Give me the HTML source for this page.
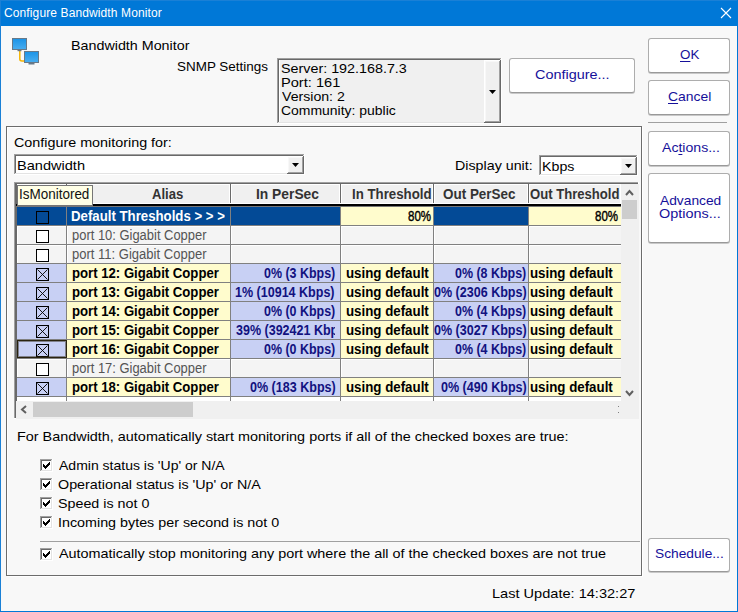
<!DOCTYPE html><html><head><meta charset="utf-8"><style>
html,body{margin:0;padding:0;width:738px;height:612px;overflow:hidden;background:#f8f8f8;}
body{position:relative;font-family:"Liberation Sans",sans-serif;}
.b,.t,.btn,.clip{position:absolute;}
.t{white-space:nowrap;}
.clip{overflow:hidden;}
u{text-underline-offset:2px;}
.btn{background:#fff;border:1px solid #adadad;border-bottom-color:#999;border-radius:3px;box-shadow:0 1px 0 #c8c8c8;}
</style></head><body>
<div class="b" style="left:0px;top:0px;width:738px;height:26px;background:#0078d7;"></div>
<div class="b" style="left:0px;top:0px;width:738px;height:1px;background:#1a80d6;"></div>
<div class="b" style="left:0px;top:0px;width:1px;height:612px;background:#1a80d6;"></div>
<div class="b" style="left:737px;top:0px;width:1px;height:612px;background:#0078d7;"></div>
<div class="b" style="left:0px;top:611px;width:738px;height:1px;background:#0078d7;"></div>
<div class="t" style="left:4.00px;top:5.84px;font-size:12px;line-height:14px;color:#fff;letter-spacing:0.115px;">Configure Bandwidth Monitor</div>
<svg class="b" style="left:719px;top:6px" width="14" height="14"><path d="M2 2 L12 12 M12 2 L2 12" stroke="#fff" stroke-width="1.1"/></svg>
<svg class="b" style="left:10px;top:36px" width="34" height="32" viewBox="0 0 34 32">
<defs><linearGradient id="mg" x1="0" y1="0" x2="0" y2="1"><stop offset="0" stop-color="#1b93e6"/><stop offset="1" stop-color="#4aaef0"/></linearGradient></defs>
<path d="M9.8 15 V23 Q9.8 25 12 25 H14.5" stroke="#f5b400" stroke-width="1.5" fill="none"/>
<rect x="2.5" y="2.5" width="14" height="11" fill="url(#mg)" stroke="#687988" stroke-width="1"/>
<rect x="7.5" y="14" width="4" height="1.2" fill="#687988"/>
<rect x="14.5" y="15.5" width="14" height="11" fill="url(#mg)" stroke="#687988" stroke-width="1"/>
<rect x="18.5" y="27" width="6" height="1.5" fill="#687988"/>
</svg>
<div class="t" style="left:71.20px;top:37.50px;font-size:13px;line-height:16px;color:#000;transform:scaleX(1.1000);transform-origin:0 0;">Bandwidth Monitor</div>
<div class="t" style="left:177.07px;top:58.50px;font-size:13px;line-height:16px;color:#000;transform:scaleX(1.0345);transform-origin:0 0;">SNMP Settings</div>
<div class="b" style="left:277px;top:58px;width:225px;height:66px;background:#fff;"></div>
<div class="b" style="left:277px;top:58px;width:224px;height:65px;background:#a0a0a0;"></div>
<div class="b" style="left:278px;top:59px;width:223px;height:64px;background:#e3e3e3;"></div>
<div class="b" style="left:278px;top:59px;width:222px;height:63px;background:#696969;"></div>
<div class="b" style="left:279px;top:60px;width:221px;height:62px;background:#f0f0f0;"></div>
<div class="b" style="left:279px;top:60px;width:1px;height:62px;background:#fff;"></div>
<div class="b" style="left:484px;top:60px;width:17px;height:63px;background:#696969;"></div>
<div class="b" style="left:484px;top:60px;width:16px;height:62px;background:#fff;"></div>
<div class="b" style="left:485px;top:61px;width:15px;height:61px;background:#a0a0a0;"></div>
<div class="b" style="left:485px;top:61px;width:14px;height:60px;background:#f8f8f8;"></div>
<div class="b" style="left:486px;top:62px;width:13px;height:59px;background:#f0f0f0;"></div>
<svg class="b" style="left:489px;top:90px" width="8" height="5"><path d="M0 0 H7 L3.5 4 Z" fill="#000"/></svg>
<div class="t" style="left:281.10px;top:60.50px;font-size:13px;line-height:16px;color:#000;transform:scaleX(1.1018);transform-origin:0 0;">Server: 192.168.7.3</div>
<div class="t" style="left:280.68px;top:74.50px;font-size:13px;line-height:16px;color:#000;transform:scaleX(1.1235);transform-origin:0 0;">Port: 161</div>
<div class="t" style="left:281.60px;top:88.50px;font-size:13px;line-height:16px;color:#000;transform:scaleX(1.0860);transform-origin:0 0;">Version: 2</div>
<div class="t" style="left:281.13px;top:102.50px;font-size:13px;line-height:16px;color:#000;transform:scaleX(1.0736);transform-origin:0 0;">Community: public</div>
<div class="btn" style="left:509px;top:58px;width:124px;height:33px;"></div>
<div class="t" style="left:535.49px;top:66.50px;font-size:13px;line-height:16px;color:#16109a;transform:scaleX(1.1092);transform-origin:0 0;">Configure...</div>
<div class="btn" style="left:648px;top:38px;width:80px;height:33px;"></div>
<div class="t" style="left:680.47px;top:46.50px;font-size:13px;line-height:16px;color:#16109a;transform:scaleX(1.0294);transform-origin:0 0;"><u>O</u>K</div>
<div class="btn" style="left:648px;top:80px;width:80px;height:33px;"></div>
<div class="t" style="left:667.93px;top:88.50px;font-size:13px;line-height:16px;color:#16109a;transform:scaleX(1.0718);transform-origin:0 0;"><u>C</u>ancel</div>
<div class="b" style="left:648px;top:122px;width:79px;height:1px;background:#a0a0a0;"></div>
<div class="btn" style="left:648px;top:131px;width:80px;height:33px;"></div>
<div class="t" style="left:662.20px;top:139.50px;font-size:13px;line-height:16px;color:#16109a;transform:scaleX(1.0827);transform-origin:0 0;">Ac<u>t</u>ions...</div>
<div class="btn" style="left:648px;top:173px;width:80px;height:68px;"></div>
<div class="t" style="left:660.10px;top:192.50px;font-size:13px;line-height:16px;color:#16109a;transform:scaleX(1.0596);transform-origin:0 0;">Advanced</div>
<div class="t" style="left:658.99px;top:205.50px;font-size:13px;line-height:16px;color:#16109a;transform:scaleX(1.1093);transform-origin:0 0;">Options...</div>
<div class="btn" style="left:648px;top:538px;width:80px;height:32px;"></div>
<div class="t" style="left:655.34px;top:546.00px;font-size:13px;line-height:16px;color:#16109a;transform:scaleX(1.0571);transform-origin:0 0;">Schedule...</div>
<div class="b" style="left:6px;top:126px;width:634px;height:448px;border:1px solid #6c6c6c;box-shadow:inset 1px 1px 0 #fff, 1px 1px 0 #fff;"></div>
<div class="t" style="left:13.97px;top:134.50px;font-size:13px;line-height:16px;color:#000;transform:scaleX(1.1030);transform-origin:0 0;">Configure monitoring for:</div>
<div class="b" style="left:14px;top:154px;width:291px;height:21px;background:#fff;"></div>
<div class="b" style="left:14px;top:154px;width:290px;height:20px;background:#a0a0a0;"></div>
<div class="b" style="left:15px;top:155px;width:289px;height:19px;background:#e3e3e3;"></div>
<div class="b" style="left:15px;top:155px;width:288px;height:18px;background:#696969;"></div>
<div class="b" style="left:16px;top:156px;width:287px;height:17px;background:#fff;"></div>
<div class="b" style="left:287px;top:156px;width:17px;height:18px;background:#696969;"></div>
<div class="b" style="left:287px;top:156px;width:16px;height:17px;background:#fff;"></div>
<div class="b" style="left:288px;top:157px;width:15px;height:16px;background:#a0a0a0;"></div>
<div class="b" style="left:288px;top:157px;width:14px;height:15px;background:#f8f8f8;"></div>
<div class="b" style="left:289px;top:158px;width:13px;height:14px;background:#f0f0f0;"></div>
<svg class="b" style="left:292px;top:163px" width="8" height="5"><path d="M0 0 H7 L3.5 4 Z" fill="#000"/></svg>
<div class="t" style="left:16.98px;top:157.50px;font-size:13px;line-height:16px;color:#000;transform:scaleX(1.1203);transform-origin:0 0;">Bandwidth</div>
<div class="t" style="left:454.50px;top:157.50px;font-size:13px;line-height:16px;color:#000;transform:scaleX(1.0971);transform-origin:0 0;">Display unit:</div>
<div class="b" style="left:539px;top:155px;width:99px;height:21px;background:#fff;"></div>
<div class="b" style="left:539px;top:155px;width:98px;height:20px;background:#a0a0a0;"></div>
<div class="b" style="left:540px;top:156px;width:97px;height:19px;background:#e3e3e3;"></div>
<div class="b" style="left:540px;top:156px;width:96px;height:18px;background:#696969;"></div>
<div class="b" style="left:541px;top:157px;width:95px;height:17px;background:#fff;"></div>
<div class="b" style="left:620px;top:157px;width:17px;height:18px;background:#696969;"></div>
<div class="b" style="left:620px;top:157px;width:16px;height:17px;background:#fff;"></div>
<div class="b" style="left:621px;top:158px;width:15px;height:16px;background:#a0a0a0;"></div>
<div class="b" style="left:621px;top:158px;width:14px;height:15px;background:#f8f8f8;"></div>
<div class="b" style="left:622px;top:159px;width:13px;height:14px;background:#f0f0f0;"></div>
<svg class="b" style="left:625px;top:164px" width="8" height="5"><path d="M0 0 H7 L3.5 4 Z" fill="#000"/></svg>
<div class="t" style="left:541.91px;top:158.50px;font-size:13px;line-height:16px;color:#000;transform:scaleX(1.0929);transform-origin:0 0;">Kbps</div>
<div class="b" style="left:14px;top:182px;width:625px;height:237px;background:#fff;"></div>
<div class="b" style="left:14px;top:182px;width:624px;height:236px;background:#a0a0a0;"></div>
<div class="b" style="left:15px;top:183px;width:623px;height:235px;background:#696969;"></div>
<div class="b" style="left:17px;top:184px;width:621px;height:234px;background:#fff;"></div>
<div class="b" style="left:17px;top:184px;width:604px;height:20px;background:#f0f0f0;"></div>
<div class="b" style="left:17px;top:184px;width:49px;height:1px;background:#fff;"></div>
<div class="b" style="left:17px;top:184px;width:1px;height:19px;background:#fff;"></div>
<div class="b" style="left:65px;top:184px;width:1px;height:19px;background:#fff;"></div>
<div class="b" style="left:66px;top:184px;width:1px;height:20px;background:#6a6a6a;"></div>
<div class="b" style="left:67px;top:184px;width:163px;height:1px;background:#fff;"></div>
<div class="b" style="left:67px;top:184px;width:1px;height:19px;background:#fff;"></div>
<div class="b" style="left:229px;top:184px;width:1px;height:19px;background:#fff;"></div>
<div class="b" style="left:230px;top:184px;width:1px;height:20px;background:#6a6a6a;"></div>
<div class="b" style="left:231px;top:184px;width:109px;height:1px;background:#fff;"></div>
<div class="b" style="left:231px;top:184px;width:1px;height:19px;background:#fff;"></div>
<div class="b" style="left:339px;top:184px;width:1px;height:19px;background:#fff;"></div>
<div class="b" style="left:340px;top:184px;width:1px;height:20px;background:#6a6a6a;"></div>
<div class="b" style="left:341px;top:184px;width:92px;height:1px;background:#fff;"></div>
<div class="b" style="left:341px;top:184px;width:1px;height:19px;background:#fff;"></div>
<div class="b" style="left:432px;top:184px;width:1px;height:19px;background:#fff;"></div>
<div class="b" style="left:433px;top:184px;width:1px;height:20px;background:#6a6a6a;"></div>
<div class="b" style="left:434px;top:184px;width:94px;height:1px;background:#fff;"></div>
<div class="b" style="left:434px;top:184px;width:1px;height:19px;background:#fff;"></div>
<div class="b" style="left:527px;top:184px;width:1px;height:19px;background:#fff;"></div>
<div class="b" style="left:528px;top:184px;width:1px;height:20px;background:#6a6a6a;"></div>
<div class="b" style="left:529px;top:184px;width:92px;height:1px;background:#fff;"></div>
<div class="b" style="left:529px;top:184px;width:1px;height:19px;background:#fff;"></div>
<div class="b" style="left:620px;top:184px;width:1px;height:19px;background:#fff;"></div>
<div class="b" style="left:621px;top:184px;width:1px;height:20px;background:#6a6a6a;"></div>
<div class="b" style="left:17px;top:203px;width:604px;height:1px;background:#fff;"></div>
<div class="b" style="left:16px;top:204px;width:605px;height:2px;background:#000;"></div>
<div class="b" style="left:16px;top:206px;width:605px;height:1px;background:#777;"></div>
<div class="t" style="left:152.20px;top:185.65px;font-size:14.0px;line-height:17px;color:#333;font-weight:bold;transform:scaleX(0.9364);transform-origin:0 0;">Alias</div>
<div class="t" style="left:255.81px;top:185.65px;font-size:14.0px;line-height:17px;color:#333;font-weight:bold;transform:scaleX(0.9871);transform-origin:0 0;">In PerSec</div>
<div class="t" style="left:351.55px;top:185.65px;font-size:14.0px;line-height:17px;color:#333;font-weight:bold;transform:scaleX(0.9476);transform-origin:0 0;">In Threshold</div>
<div class="t" style="left:442.54px;top:185.65px;font-size:14.0px;line-height:17px;color:#333;font-weight:bold;transform:scaleX(0.9608);transform-origin:0 0;">Out PerSec</div>
<div class="t" style="left:530.06px;top:185.65px;font-size:14.0px;line-height:17px;color:#333;font-weight:bold;transform:scaleX(0.9351);transform-origin:0 0;">Out Threshold</div>
<div class="b" style="left:17px;top:207px;width:49px;height:18px;background:#034a96;"></div>
<div class="b" style="left:66px;top:207px;width:1px;height:19px;background:#808080;"></div>
<div class="b" style="left:67px;top:207px;width:163px;height:18px;background:#034a96;"></div>
<div class="b" style="left:230px;top:207px;width:1px;height:19px;background:#808080;"></div>
<div class="b" style="left:231px;top:207px;width:109px;height:18px;background:#034a96;"></div>
<div class="b" style="left:340px;top:207px;width:1px;height:19px;background:#808080;"></div>
<div class="b" style="left:341px;top:207px;width:92px;height:18px;background:#fffccd;"></div>
<div class="b" style="left:433px;top:207px;width:1px;height:19px;background:#808080;"></div>
<div class="b" style="left:434px;top:207px;width:94px;height:18px;background:#034a96;"></div>
<div class="b" style="left:528px;top:207px;width:1px;height:19px;background:#808080;"></div>
<div class="b" style="left:529px;top:207px;width:92px;height:18px;background:#fffccd;"></div>
<div class="b" style="left:621px;top:207px;width:1px;height:19px;background:#808080;"></div>
<div class="b" style="left:17px;top:225px;width:604px;height:1px;background:#808080;"></div>
<div class="b" style="left:36px;top:211px;width:13px;height:13px;background:#034a96;border:1px solid #000;box-sizing:border-box;"></div>
<div class="t" style="left:71.46px;top:207.65px;font-size:14.0px;line-height:17px;color:#fff;font-weight:bold;transform:scaleX(0.9444);transform-origin:0 0;">Default Thresholds &gt; &gt; &gt;</div>
<div class="t" style="left:408.18px;top:207.65px;font-size:14px;line-height:17px;color:#000;transform:scaleX(0.8222);transform-origin:0 0;-webkit-text-stroke:0.4px #000;">80%</div>
<div class="t" style="left:594.98px;top:207.65px;font-size:14px;line-height:17px;color:#000;transform:scaleX(0.8222);transform-origin:0 0;-webkit-text-stroke:0.4px #000;">80%</div>
<div class="b" style="left:17px;top:226px;width:49px;height:18px;background:#f4f4f4;"></div>
<div class="b" style="left:66px;top:226px;width:1px;height:19px;background:#808080;"></div>
<div class="b" style="left:17px;top:226px;width:49px;height:1px;background:#fff;"></div>
<div class="b" style="left:17px;top:226px;width:1px;height:18px;background:#fff;"></div>
<div class="b" style="left:67px;top:226px;width:163px;height:18px;background:#f4f4f4;"></div>
<div class="b" style="left:230px;top:226px;width:1px;height:19px;background:#808080;"></div>
<div class="b" style="left:67px;top:226px;width:163px;height:1px;background:#fff;"></div>
<div class="b" style="left:67px;top:226px;width:1px;height:18px;background:#fff;"></div>
<div class="b" style="left:231px;top:226px;width:109px;height:18px;background:#f4f4f4;"></div>
<div class="b" style="left:340px;top:226px;width:1px;height:19px;background:#808080;"></div>
<div class="b" style="left:231px;top:226px;width:109px;height:1px;background:#fff;"></div>
<div class="b" style="left:231px;top:226px;width:1px;height:18px;background:#fff;"></div>
<div class="b" style="left:341px;top:226px;width:92px;height:18px;background:#f4f4f4;"></div>
<div class="b" style="left:433px;top:226px;width:1px;height:19px;background:#808080;"></div>
<div class="b" style="left:341px;top:226px;width:92px;height:1px;background:#fff;"></div>
<div class="b" style="left:341px;top:226px;width:1px;height:18px;background:#fff;"></div>
<div class="b" style="left:434px;top:226px;width:94px;height:18px;background:#f4f4f4;"></div>
<div class="b" style="left:528px;top:226px;width:1px;height:19px;background:#808080;"></div>
<div class="b" style="left:434px;top:226px;width:94px;height:1px;background:#fff;"></div>
<div class="b" style="left:434px;top:226px;width:1px;height:18px;background:#fff;"></div>
<div class="b" style="left:529px;top:226px;width:92px;height:18px;background:#f4f4f4;"></div>
<div class="b" style="left:621px;top:226px;width:1px;height:19px;background:#808080;"></div>
<div class="b" style="left:529px;top:226px;width:92px;height:1px;background:#fff;"></div>
<div class="b" style="left:529px;top:226px;width:1px;height:18px;background:#fff;"></div>
<div class="b" style="left:17px;top:244px;width:604px;height:1px;background:#808080;"></div>
<div class="b" style="left:36px;top:230px;width:13px;height:13px;background:#fff;border:1px solid #000;box-sizing:border-box;"></div>
<div class="t" style="left:72.48px;top:226.65px;font-size:14.0px;line-height:17px;color:#555;transform:scaleX(0.9243);transform-origin:0 0;">port 10: Gigabit Copper</div>
<div class="b" style="left:17px;top:245px;width:49px;height:18px;background:#f4f4f4;"></div>
<div class="b" style="left:66px;top:245px;width:1px;height:19px;background:#808080;"></div>
<div class="b" style="left:17px;top:245px;width:49px;height:1px;background:#fff;"></div>
<div class="b" style="left:17px;top:245px;width:1px;height:18px;background:#fff;"></div>
<div class="b" style="left:67px;top:245px;width:163px;height:18px;background:#f4f4f4;"></div>
<div class="b" style="left:230px;top:245px;width:1px;height:19px;background:#808080;"></div>
<div class="b" style="left:67px;top:245px;width:163px;height:1px;background:#fff;"></div>
<div class="b" style="left:67px;top:245px;width:1px;height:18px;background:#fff;"></div>
<div class="b" style="left:231px;top:245px;width:109px;height:18px;background:#f4f4f4;"></div>
<div class="b" style="left:340px;top:245px;width:1px;height:19px;background:#808080;"></div>
<div class="b" style="left:231px;top:245px;width:109px;height:1px;background:#fff;"></div>
<div class="b" style="left:231px;top:245px;width:1px;height:18px;background:#fff;"></div>
<div class="b" style="left:341px;top:245px;width:92px;height:18px;background:#f4f4f4;"></div>
<div class="b" style="left:433px;top:245px;width:1px;height:19px;background:#808080;"></div>
<div class="b" style="left:341px;top:245px;width:92px;height:1px;background:#fff;"></div>
<div class="b" style="left:341px;top:245px;width:1px;height:18px;background:#fff;"></div>
<div class="b" style="left:434px;top:245px;width:94px;height:18px;background:#f4f4f4;"></div>
<div class="b" style="left:528px;top:245px;width:1px;height:19px;background:#808080;"></div>
<div class="b" style="left:434px;top:245px;width:94px;height:1px;background:#fff;"></div>
<div class="b" style="left:434px;top:245px;width:1px;height:18px;background:#fff;"></div>
<div class="b" style="left:529px;top:245px;width:92px;height:18px;background:#f4f4f4;"></div>
<div class="b" style="left:621px;top:245px;width:1px;height:19px;background:#808080;"></div>
<div class="b" style="left:529px;top:245px;width:92px;height:1px;background:#fff;"></div>
<div class="b" style="left:529px;top:245px;width:1px;height:18px;background:#fff;"></div>
<div class="b" style="left:17px;top:263px;width:604px;height:1px;background:#808080;"></div>
<div class="b" style="left:36px;top:249px;width:13px;height:13px;background:#fff;border:1px solid #000;box-sizing:border-box;"></div>
<div class="t" style="left:72.47px;top:245.65px;font-size:14.0px;line-height:17px;color:#555;transform:scaleX(0.9308);transform-origin:0 0;">port 11: Gigabit Copper</div>
<div class="b" style="left:17px;top:264px;width:49px;height:18px;background:#c8d0f4;"></div>
<div class="b" style="left:66px;top:264px;width:1px;height:19px;background:#808080;"></div>
<div class="b" style="left:67px;top:264px;width:163px;height:18px;background:#fffccd;"></div>
<div class="b" style="left:230px;top:264px;width:1px;height:19px;background:#808080;"></div>
<div class="b" style="left:231px;top:264px;width:109px;height:18px;background:#c8d0f4;"></div>
<div class="b" style="left:340px;top:264px;width:1px;height:19px;background:#808080;"></div>
<div class="b" style="left:341px;top:264px;width:92px;height:18px;background:#fffccd;"></div>
<div class="b" style="left:433px;top:264px;width:1px;height:19px;background:#808080;"></div>
<div class="b" style="left:434px;top:264px;width:94px;height:18px;background:#c8d0f4;"></div>
<div class="b" style="left:528px;top:264px;width:1px;height:19px;background:#808080;"></div>
<div class="b" style="left:529px;top:264px;width:92px;height:18px;background:#fffccd;"></div>
<div class="b" style="left:621px;top:264px;width:1px;height:19px;background:#808080;"></div>
<div class="b" style="left:17px;top:282px;width:604px;height:1px;background:#808080;"></div>
<div class="b" style="left:36px;top:268px;width:13px;height:13px;background:#c8d0f4;border:1px solid #000;box-sizing:border-box;"></div>
<svg class="b" style="left:36px;top:268px" width="13" height="13"><path d="M1.5 1.5 L11.5 11.5 M11.5 1.5 L1.5 11.5" stroke="#000" stroke-width="0.9"/></svg>
<div class="t" style="left:71.96px;top:264.65px;font-size:14.0px;line-height:17px;color:#000;font-weight:bold;transform:scaleX(0.9394);transform-origin:0 0;">port 12: Gigabit Copper</div>
<div class="t" style="left:263.51px;top:264.65px;font-size:14.0px;line-height:17px;color:#121280;font-weight:bold;transform:scaleX(0.8886);transform-origin:0 0;">0% (3 Kbps)</div>
<div class="t" style="left:345.75px;top:264.65px;font-size:14.0px;line-height:17px;color:#000;font-weight:bold;transform:scaleX(0.9500);transform-origin:0 0;">using default</div>
<div class="t" style="left:455.01px;top:264.65px;font-size:14.0px;line-height:17px;color:#121280;font-weight:bold;transform:scaleX(0.8886);transform-origin:0 0;">0% (8 Kbps)</div>
<div class="t" style="left:529.65px;top:264.65px;font-size:14.0px;line-height:17px;color:#000;font-weight:bold;transform:scaleX(0.9500);transform-origin:0 0;">using default</div>
<div class="b" style="left:17px;top:283px;width:49px;height:18px;background:#c8d0f4;"></div>
<div class="b" style="left:66px;top:283px;width:1px;height:19px;background:#808080;"></div>
<div class="b" style="left:67px;top:283px;width:163px;height:18px;background:#fffccd;"></div>
<div class="b" style="left:230px;top:283px;width:1px;height:19px;background:#808080;"></div>
<div class="b" style="left:231px;top:283px;width:109px;height:18px;background:#c8d0f4;"></div>
<div class="b" style="left:340px;top:283px;width:1px;height:19px;background:#808080;"></div>
<div class="b" style="left:341px;top:283px;width:92px;height:18px;background:#fffccd;"></div>
<div class="b" style="left:433px;top:283px;width:1px;height:19px;background:#808080;"></div>
<div class="b" style="left:434px;top:283px;width:94px;height:18px;background:#c8d0f4;"></div>
<div class="b" style="left:528px;top:283px;width:1px;height:19px;background:#808080;"></div>
<div class="b" style="left:529px;top:283px;width:92px;height:18px;background:#fffccd;"></div>
<div class="b" style="left:621px;top:283px;width:1px;height:19px;background:#808080;"></div>
<div class="b" style="left:17px;top:301px;width:604px;height:1px;background:#808080;"></div>
<div class="b" style="left:36px;top:287px;width:13px;height:13px;background:#c8d0f4;border:1px solid #000;box-sizing:border-box;"></div>
<svg class="b" style="left:36px;top:287px" width="13" height="13"><path d="M1.5 1.5 L11.5 11.5 M11.5 1.5 L1.5 11.5" stroke="#000" stroke-width="0.9"/></svg>
<div class="t" style="left:71.96px;top:283.65px;font-size:14.0px;line-height:17px;color:#000;font-weight:bold;transform:scaleX(0.9394);transform-origin:0 0;">port 13: Gigabit Copper</div>
<div class="t" style="left:235.31px;top:283.65px;font-size:14.0px;line-height:17px;color:#121280;font-weight:bold;transform:scaleX(0.8945);transform-origin:0 0;">1% (10914 Kbps)</div>
<div class="t" style="left:345.75px;top:283.65px;font-size:14.0px;line-height:17px;color:#000;font-weight:bold;transform:scaleX(0.9500);transform-origin:0 0;">using default</div>
<div class="t" style="left:433.90px;top:283.65px;font-size:14.0px;line-height:17px;color:#121280;font-weight:bold;transform:scaleX(0.8951);transform-origin:0 0;">0% (2306 Kbps)</div>
<div class="t" style="left:529.65px;top:283.65px;font-size:14.0px;line-height:17px;color:#000;font-weight:bold;transform:scaleX(0.9500);transform-origin:0 0;">using default</div>
<div class="b" style="left:17px;top:302px;width:49px;height:18px;background:#c8d0f4;"></div>
<div class="b" style="left:66px;top:302px;width:1px;height:19px;background:#808080;"></div>
<div class="b" style="left:67px;top:302px;width:163px;height:18px;background:#fffccd;"></div>
<div class="b" style="left:230px;top:302px;width:1px;height:19px;background:#808080;"></div>
<div class="b" style="left:231px;top:302px;width:109px;height:18px;background:#c8d0f4;"></div>
<div class="b" style="left:340px;top:302px;width:1px;height:19px;background:#808080;"></div>
<div class="b" style="left:341px;top:302px;width:92px;height:18px;background:#fffccd;"></div>
<div class="b" style="left:433px;top:302px;width:1px;height:19px;background:#808080;"></div>
<div class="b" style="left:434px;top:302px;width:94px;height:18px;background:#c8d0f4;"></div>
<div class="b" style="left:528px;top:302px;width:1px;height:19px;background:#808080;"></div>
<div class="b" style="left:529px;top:302px;width:92px;height:18px;background:#fffccd;"></div>
<div class="b" style="left:621px;top:302px;width:1px;height:19px;background:#808080;"></div>
<div class="b" style="left:17px;top:320px;width:604px;height:1px;background:#808080;"></div>
<div class="b" style="left:36px;top:306px;width:13px;height:13px;background:#c8d0f4;border:1px solid #000;box-sizing:border-box;"></div>
<svg class="b" style="left:36px;top:306px" width="13" height="13"><path d="M1.5 1.5 L11.5 11.5 M11.5 1.5 L1.5 11.5" stroke="#000" stroke-width="0.9"/></svg>
<div class="t" style="left:71.96px;top:302.65px;font-size:14.0px;line-height:17px;color:#000;font-weight:bold;transform:scaleX(0.9394);transform-origin:0 0;">port 14: Gigabit Copper</div>
<div class="t" style="left:263.51px;top:302.65px;font-size:14.0px;line-height:17px;color:#121280;font-weight:bold;transform:scaleX(0.8886);transform-origin:0 0;">0% (0 Kbps)</div>
<div class="t" style="left:345.75px;top:302.65px;font-size:14.0px;line-height:17px;color:#000;font-weight:bold;transform:scaleX(0.9500);transform-origin:0 0;">using default</div>
<div class="t" style="left:455.01px;top:302.65px;font-size:14.0px;line-height:17px;color:#121280;font-weight:bold;transform:scaleX(0.8886);transform-origin:0 0;">0% (4 Kbps)</div>
<div class="t" style="left:529.65px;top:302.65px;font-size:14.0px;line-height:17px;color:#000;font-weight:bold;transform:scaleX(0.9500);transform-origin:0 0;">using default</div>
<div class="b" style="left:17px;top:321px;width:49px;height:18px;background:#c8d0f4;"></div>
<div class="b" style="left:66px;top:321px;width:1px;height:19px;background:#808080;"></div>
<div class="b" style="left:67px;top:321px;width:163px;height:18px;background:#fffccd;"></div>
<div class="b" style="left:230px;top:321px;width:1px;height:19px;background:#808080;"></div>
<div class="b" style="left:231px;top:321px;width:109px;height:18px;background:#c8d0f4;"></div>
<div class="b" style="left:340px;top:321px;width:1px;height:19px;background:#808080;"></div>
<div class="b" style="left:341px;top:321px;width:92px;height:18px;background:#fffccd;"></div>
<div class="b" style="left:433px;top:321px;width:1px;height:19px;background:#808080;"></div>
<div class="b" style="left:434px;top:321px;width:94px;height:18px;background:#c8d0f4;"></div>
<div class="b" style="left:528px;top:321px;width:1px;height:19px;background:#808080;"></div>
<div class="b" style="left:529px;top:321px;width:92px;height:18px;background:#fffccd;"></div>
<div class="b" style="left:621px;top:321px;width:1px;height:19px;background:#808080;"></div>
<div class="b" style="left:17px;top:339px;width:604px;height:1px;background:#808080;"></div>
<div class="b" style="left:36px;top:325px;width:13px;height:13px;background:#c8d0f4;border:1px solid #000;box-sizing:border-box;"></div>
<svg class="b" style="left:36px;top:325px" width="13" height="13"><path d="M1.5 1.5 L11.5 11.5 M11.5 1.5 L1.5 11.5" stroke="#000" stroke-width="0.9"/></svg>
<div class="t" style="left:71.96px;top:321.65px;font-size:14.0px;line-height:17px;color:#000;font-weight:bold;transform:scaleX(0.9394);transform-origin:0 0;">port 15: Gigabit Copper</div>
<div class="clip" style="left:231px;top:321px;width:104px;height:18px;">
<div class="t" style="left:5.20px;top:0.65px;font-size:14.0px;line-height:17px;color:#121280;font-weight:bold;transform:scaleX(0.8937);transform-origin:0 0;">39% (392421 Kbps)</div>
</div>
<div class="t" style="left:345.75px;top:321.65px;font-size:14.0px;line-height:17px;color:#000;font-weight:bold;transform:scaleX(0.9500);transform-origin:0 0;">using default</div>
<div class="t" style="left:433.90px;top:321.65px;font-size:14.0px;line-height:17px;color:#121280;font-weight:bold;transform:scaleX(0.8951);transform-origin:0 0;">0% (3027 Kbps)</div>
<div class="t" style="left:529.65px;top:321.65px;font-size:14.0px;line-height:17px;color:#000;font-weight:bold;transform:scaleX(0.9500);transform-origin:0 0;">using default</div>
<div class="b" style="left:17px;top:340px;width:49px;height:18px;background:#c8d0f4;"></div>
<div class="b" style="left:66px;top:340px;width:1px;height:19px;background:#808080;"></div>
<div class="b" style="left:67px;top:340px;width:163px;height:18px;background:#fffccd;"></div>
<div class="b" style="left:230px;top:340px;width:1px;height:19px;background:#808080;"></div>
<div class="b" style="left:231px;top:340px;width:109px;height:18px;background:#c8d0f4;"></div>
<div class="b" style="left:340px;top:340px;width:1px;height:19px;background:#808080;"></div>
<div class="b" style="left:341px;top:340px;width:92px;height:18px;background:#fffccd;"></div>
<div class="b" style="left:433px;top:340px;width:1px;height:19px;background:#808080;"></div>
<div class="b" style="left:434px;top:340px;width:94px;height:18px;background:#c8d0f4;"></div>
<div class="b" style="left:528px;top:340px;width:1px;height:19px;background:#808080;"></div>
<div class="b" style="left:529px;top:340px;width:92px;height:18px;background:#fffccd;"></div>
<div class="b" style="left:621px;top:340px;width:1px;height:19px;background:#808080;"></div>
<div class="b" style="left:17px;top:358px;width:604px;height:1px;background:#808080;"></div>
<div class="b" style="left:36px;top:344px;width:13px;height:13px;background:#c8d0f4;border:1px solid #000;box-sizing:border-box;"></div>
<svg class="b" style="left:36px;top:344px" width="13" height="13"><path d="M1.5 1.5 L11.5 11.5 M11.5 1.5 L1.5 11.5" stroke="#000" stroke-width="0.9"/></svg>
<div class="t" style="left:71.96px;top:340.65px;font-size:14.0px;line-height:17px;color:#000;font-weight:bold;transform:scaleX(0.9394);transform-origin:0 0;">port 16: Gigabit Copper</div>
<div class="t" style="left:263.51px;top:340.65px;font-size:14.0px;line-height:17px;color:#121280;font-weight:bold;transform:scaleX(0.8886);transform-origin:0 0;">0% (0 Kbps)</div>
<div class="t" style="left:345.75px;top:340.65px;font-size:14.0px;line-height:17px;color:#000;font-weight:bold;transform:scaleX(0.9500);transform-origin:0 0;">using default</div>
<div class="t" style="left:455.01px;top:340.65px;font-size:14.0px;line-height:17px;color:#121280;font-weight:bold;transform:scaleX(0.8886);transform-origin:0 0;">0% (4 Kbps)</div>
<div class="t" style="left:529.65px;top:340.65px;font-size:14.0px;line-height:17px;color:#000;font-weight:bold;transform:scaleX(0.9500);transform-origin:0 0;">using default</div>
<div class="b" style="left:17px;top:359px;width:49px;height:18px;background:#f4f4f4;"></div>
<div class="b" style="left:66px;top:359px;width:1px;height:19px;background:#808080;"></div>
<div class="b" style="left:17px;top:359px;width:49px;height:1px;background:#fff;"></div>
<div class="b" style="left:17px;top:359px;width:1px;height:18px;background:#fff;"></div>
<div class="b" style="left:67px;top:359px;width:163px;height:18px;background:#f4f4f4;"></div>
<div class="b" style="left:230px;top:359px;width:1px;height:19px;background:#808080;"></div>
<div class="b" style="left:67px;top:359px;width:163px;height:1px;background:#fff;"></div>
<div class="b" style="left:67px;top:359px;width:1px;height:18px;background:#fff;"></div>
<div class="b" style="left:231px;top:359px;width:109px;height:18px;background:#f4f4f4;"></div>
<div class="b" style="left:340px;top:359px;width:1px;height:19px;background:#808080;"></div>
<div class="b" style="left:231px;top:359px;width:109px;height:1px;background:#fff;"></div>
<div class="b" style="left:231px;top:359px;width:1px;height:18px;background:#fff;"></div>
<div class="b" style="left:341px;top:359px;width:92px;height:18px;background:#f4f4f4;"></div>
<div class="b" style="left:433px;top:359px;width:1px;height:19px;background:#808080;"></div>
<div class="b" style="left:341px;top:359px;width:92px;height:1px;background:#fff;"></div>
<div class="b" style="left:341px;top:359px;width:1px;height:18px;background:#fff;"></div>
<div class="b" style="left:434px;top:359px;width:94px;height:18px;background:#f4f4f4;"></div>
<div class="b" style="left:528px;top:359px;width:1px;height:19px;background:#808080;"></div>
<div class="b" style="left:434px;top:359px;width:94px;height:1px;background:#fff;"></div>
<div class="b" style="left:434px;top:359px;width:1px;height:18px;background:#fff;"></div>
<div class="b" style="left:529px;top:359px;width:92px;height:18px;background:#f4f4f4;"></div>
<div class="b" style="left:621px;top:359px;width:1px;height:19px;background:#808080;"></div>
<div class="b" style="left:529px;top:359px;width:92px;height:1px;background:#fff;"></div>
<div class="b" style="left:529px;top:359px;width:1px;height:18px;background:#fff;"></div>
<div class="b" style="left:17px;top:377px;width:604px;height:1px;background:#808080;"></div>
<div class="b" style="left:36px;top:363px;width:13px;height:13px;background:#fff;border:1px solid #000;box-sizing:border-box;"></div>
<div class="t" style="left:72.48px;top:359.65px;font-size:14.0px;line-height:17px;color:#555;transform:scaleX(0.9243);transform-origin:0 0;">port 17: Gigabit Copper</div>
<div class="b" style="left:17px;top:378px;width:49px;height:18px;background:#c8d0f4;"></div>
<div class="b" style="left:66px;top:378px;width:1px;height:19px;background:#808080;"></div>
<div class="b" style="left:67px;top:378px;width:163px;height:18px;background:#fffccd;"></div>
<div class="b" style="left:230px;top:378px;width:1px;height:19px;background:#808080;"></div>
<div class="b" style="left:231px;top:378px;width:109px;height:18px;background:#c8d0f4;"></div>
<div class="b" style="left:340px;top:378px;width:1px;height:19px;background:#808080;"></div>
<div class="b" style="left:341px;top:378px;width:92px;height:18px;background:#fffccd;"></div>
<div class="b" style="left:433px;top:378px;width:1px;height:19px;background:#808080;"></div>
<div class="b" style="left:434px;top:378px;width:94px;height:18px;background:#c8d0f4;"></div>
<div class="b" style="left:528px;top:378px;width:1px;height:19px;background:#808080;"></div>
<div class="b" style="left:529px;top:378px;width:92px;height:18px;background:#fffccd;"></div>
<div class="b" style="left:621px;top:378px;width:1px;height:19px;background:#808080;"></div>
<div class="b" style="left:17px;top:396px;width:604px;height:1px;background:#808080;"></div>
<div class="b" style="left:36px;top:382px;width:13px;height:13px;background:#c8d0f4;border:1px solid #000;box-sizing:border-box;"></div>
<svg class="b" style="left:36px;top:382px" width="13" height="13"><path d="M1.5 1.5 L11.5 11.5 M11.5 1.5 L1.5 11.5" stroke="#000" stroke-width="0.9"/></svg>
<div class="t" style="left:71.96px;top:378.65px;font-size:14.0px;line-height:17px;color:#000;font-weight:bold;transform:scaleX(0.9394);transform-origin:0 0;">port 18: Gigabit Copper</div>
<div class="t" style="left:249.50px;top:378.65px;font-size:14.0px;line-height:17px;color:#121280;font-weight:bold;transform:scaleX(0.8957);transform-origin:0 0;">0% (183 Kbps)</div>
<div class="t" style="left:345.75px;top:378.65px;font-size:14.0px;line-height:17px;color:#000;font-weight:bold;transform:scaleX(0.9500);transform-origin:0 0;">using default</div>
<div class="t" style="left:441.00px;top:378.65px;font-size:14.0px;line-height:17px;color:#121280;font-weight:bold;transform:scaleX(0.8957);transform-origin:0 0;">0% (490 Kbps)</div>
<div class="t" style="left:529.65px;top:378.65px;font-size:14.0px;line-height:17px;color:#000;font-weight:bold;transform:scaleX(0.9500);transform-origin:0 0;">using default</div>
<div class="b" style="left:17px;top:340px;width:50px;height:18px;border:1px solid #2a2410;box-shadow:inset 0 0 0 1px rgba(42,36,16,0.45);box-sizing:border-box;"></div>
<div class="b" style="left:17px;top:185px;width:76px;height:21px;background:#ffffe6;border:1px solid #767676;box-sizing:border-box;"></div>
<div class="t" style="left:18.94px;top:185.65px;font-size:14px;line-height:17px;color:#111;transform:scaleX(0.9620);transform-origin:0 0;">IsMonitored</div>
<div class="b" style="left:621px;top:184px;width:18px;height:218px;background:#f0f0f0;"></div>
<div class="b" style="left:622px;top:200px;width:15px;height:19px;background:#cdcdcd;"></div>
<svg class="b" style="left:625px;top:189px" width="10" height="8"><path d="M1 6 L4.5 2 L8 6" stroke="#606060" stroke-width="2" fill="none"/></svg>
<svg class="b" style="left:625px;top:389px" width="10" height="8"><path d="M1 2 L4.5 6 L8 2" stroke="#606060" stroke-width="2" fill="none"/></svg>
<div class="b" style="left:17px;top:397px;width:604px;height:4px;background:#fff;"></div>
<div class="b" style="left:66px;top:397px;width:1px;height:4px;background:#808080;"></div>
<div class="b" style="left:230px;top:397px;width:1px;height:4px;background:#808080;"></div>
<div class="b" style="left:340px;top:397px;width:1px;height:4px;background:#808080;"></div>
<div class="b" style="left:433px;top:397px;width:1px;height:4px;background:#808080;"></div>
<div class="b" style="left:528px;top:397px;width:1px;height:4px;background:#808080;"></div>
<div class="b" style="left:16px;top:401px;width:623px;height:18px;background:#f0f0f0;"></div>
<div class="b" style="left:33px;top:402px;width:160px;height:15px;background:#cdcdcd;"></div>
<svg class="b" style="left:20px;top:405px" width="8" height="10"><path d="M6 1 L2 4.5 L6 8" stroke="#606060" stroke-width="2" fill="none"/></svg>
<div class="b" style="left:618px;top:406px;width:1px;height:1px;background:#808080;"></div>
<div class="b" style="left:618px;top:412px;width:1px;height:1px;background:#808080;"></div>
<div class="t" style="left:16.99px;top:428.50px;font-size:13px;line-height:16px;color:#000;transform:scaleX(1.1077);transform-origin:0 0;">For Bandwidth, automatically start monitoring ports if all of the checked boxes are true:</div>
<div class="b" style="left:40px;top:459px;width:13px;height:13px;background:#fff;"></div>
<div class="b" style="left:40px;top:459px;width:12px;height:12px;background:#a0a0a0;"></div>
<div class="b" style="left:41px;top:460px;width:11px;height:11px;background:#e3e3e3;"></div>
<div class="b" style="left:41px;top:460px;width:10px;height:10px;background:#696969;"></div>
<div class="b" style="left:42px;top:461px;width:9px;height:9px;background:#fff;"></div>
<svg class="b" style="left:40px;top:459px" width="13" height="13" shape-rendering="crispEdges"><path d="M9 3h1v1h-1zM8 4h1v1h-1zM9 4h1v1h-1zM3 5h1v1h-1zM7 5h1v1h-1zM8 5h1v1h-1zM9 5h1v1h-1zM3 6h1v1h-1zM4 6h1v1h-1zM6 6h1v1h-1zM7 6h1v1h-1zM8 6h1v1h-1zM3 7h1v1h-1zM4 7h1v1h-1zM5 7h1v1h-1zM6 7h1v1h-1zM7 7h1v1h-1zM4 8h1v1h-1zM5 8h1v1h-1zM6 8h1v1h-1zM5 9h1v1h-1z" fill="#000"/></svg>
<div class="t" style="left:59.10px;top:457.50px;font-size:13px;line-height:16px;color:#000;transform:scaleX(1.0773);transform-origin:0 0;">Admin status is 'Up' or N/A</div>
<div class="b" style="left:40px;top:478px;width:13px;height:13px;background:#fff;"></div>
<div class="b" style="left:40px;top:478px;width:12px;height:12px;background:#a0a0a0;"></div>
<div class="b" style="left:41px;top:479px;width:11px;height:11px;background:#e3e3e3;"></div>
<div class="b" style="left:41px;top:479px;width:10px;height:10px;background:#696969;"></div>
<div class="b" style="left:42px;top:480px;width:9px;height:9px;background:#fff;"></div>
<svg class="b" style="left:40px;top:478px" width="13" height="13" shape-rendering="crispEdges"><path d="M9 3h1v1h-1zM8 4h1v1h-1zM9 4h1v1h-1zM3 5h1v1h-1zM7 5h1v1h-1zM8 5h1v1h-1zM9 5h1v1h-1zM3 6h1v1h-1zM4 6h1v1h-1zM6 6h1v1h-1zM7 6h1v1h-1zM8 6h1v1h-1zM3 7h1v1h-1zM4 7h1v1h-1zM5 7h1v1h-1zM6 7h1v1h-1zM7 7h1v1h-1zM4 8h1v1h-1zM5 8h1v1h-1zM6 8h1v1h-1zM5 9h1v1h-1z" fill="#000"/></svg>
<div class="t" style="left:58.00px;top:476.50px;font-size:13px;line-height:16px;color:#000;transform:scaleX(1.1016);transform-origin:0 0;">Operational status is 'Up' or N/A</div>
<div class="b" style="left:40px;top:497px;width:13px;height:13px;background:#fff;"></div>
<div class="b" style="left:40px;top:497px;width:12px;height:12px;background:#a0a0a0;"></div>
<div class="b" style="left:41px;top:498px;width:11px;height:11px;background:#e3e3e3;"></div>
<div class="b" style="left:41px;top:498px;width:10px;height:10px;background:#696969;"></div>
<div class="b" style="left:42px;top:499px;width:9px;height:9px;background:#fff;"></div>
<svg class="b" style="left:40px;top:497px" width="13" height="13" shape-rendering="crispEdges"><path d="M9 3h1v1h-1zM8 4h1v1h-1zM9 4h1v1h-1zM3 5h1v1h-1zM7 5h1v1h-1zM8 5h1v1h-1zM9 5h1v1h-1zM3 6h1v1h-1zM4 6h1v1h-1zM6 6h1v1h-1zM7 6h1v1h-1zM8 6h1v1h-1zM3 7h1v1h-1zM4 7h1v1h-1zM5 7h1v1h-1zM6 7h1v1h-1zM7 7h1v1h-1zM4 8h1v1h-1zM5 8h1v1h-1zM6 8h1v1h-1zM5 9h1v1h-1z" fill="#000"/></svg>
<div class="t" style="left:58.00px;top:495.50px;font-size:13px;line-height:16px;color:#000;transform:scaleX(1.0988);transform-origin:0 0;">Speed is not 0</div>
<div class="b" style="left:40px;top:516px;width:13px;height:13px;background:#fff;"></div>
<div class="b" style="left:40px;top:516px;width:12px;height:12px;background:#a0a0a0;"></div>
<div class="b" style="left:41px;top:517px;width:11px;height:11px;background:#e3e3e3;"></div>
<div class="b" style="left:41px;top:517px;width:10px;height:10px;background:#696969;"></div>
<div class="b" style="left:42px;top:518px;width:9px;height:9px;background:#fff;"></div>
<svg class="b" style="left:40px;top:516px" width="13" height="13" shape-rendering="crispEdges"><path d="M9 3h1v1h-1zM8 4h1v1h-1zM9 4h1v1h-1zM3 5h1v1h-1zM7 5h1v1h-1zM8 5h1v1h-1zM9 5h1v1h-1zM3 6h1v1h-1zM4 6h1v1h-1zM6 6h1v1h-1zM7 6h1v1h-1zM8 6h1v1h-1zM3 7h1v1h-1zM4 7h1v1h-1zM5 7h1v1h-1zM6 7h1v1h-1zM7 7h1v1h-1zM4 8h1v1h-1zM5 8h1v1h-1zM6 8h1v1h-1zM5 9h1v1h-1z" fill="#000"/></svg>
<div class="t" style="left:58.00px;top:514.50px;font-size:13px;line-height:16px;color:#000;transform:scaleX(1.1010);transform-origin:0 0;">Incoming bytes per second is not 0</div>
<div class="b" style="left:40px;top:541px;width:600px;height:1px;background:#a0a0a0;"></div>
<div class="b" style="left:40px;top:548px;width:13px;height:13px;background:#fff;"></div>
<div class="b" style="left:40px;top:548px;width:12px;height:12px;background:#a0a0a0;"></div>
<div class="b" style="left:41px;top:549px;width:11px;height:11px;background:#e3e3e3;"></div>
<div class="b" style="left:41px;top:549px;width:10px;height:10px;background:#696969;"></div>
<div class="b" style="left:42px;top:550px;width:9px;height:9px;background:#fff;"></div>
<svg class="b" style="left:40px;top:548px" width="13" height="13" shape-rendering="crispEdges"><path d="M9 3h1v1h-1zM8 4h1v1h-1zM9 4h1v1h-1zM3 5h1v1h-1zM7 5h1v1h-1zM8 5h1v1h-1zM9 5h1v1h-1zM3 6h1v1h-1zM4 6h1v1h-1zM6 6h1v1h-1zM7 6h1v1h-1zM8 6h1v1h-1zM3 7h1v1h-1zM4 7h1v1h-1zM5 7h1v1h-1zM6 7h1v1h-1zM7 7h1v1h-1zM4 8h1v1h-1zM5 8h1v1h-1zM6 8h1v1h-1zM5 9h1v1h-1z" fill="#000"/></svg>
<div class="t" style="left:59.10px;top:545.90px;font-size:13px;line-height:16px;color:#000;transform:scaleX(1.1069);transform-origin:0 0;">Automatically stop monitoring any port where the all of the checked boxes are not true</div>
<div class="t" style="left:492.28px;top:585.50px;font-size:13px;line-height:16px;color:#000;transform:scaleX(1.1205);transform-origin:0 0;">Last Update: 14:32:27</div>
</body></html>
